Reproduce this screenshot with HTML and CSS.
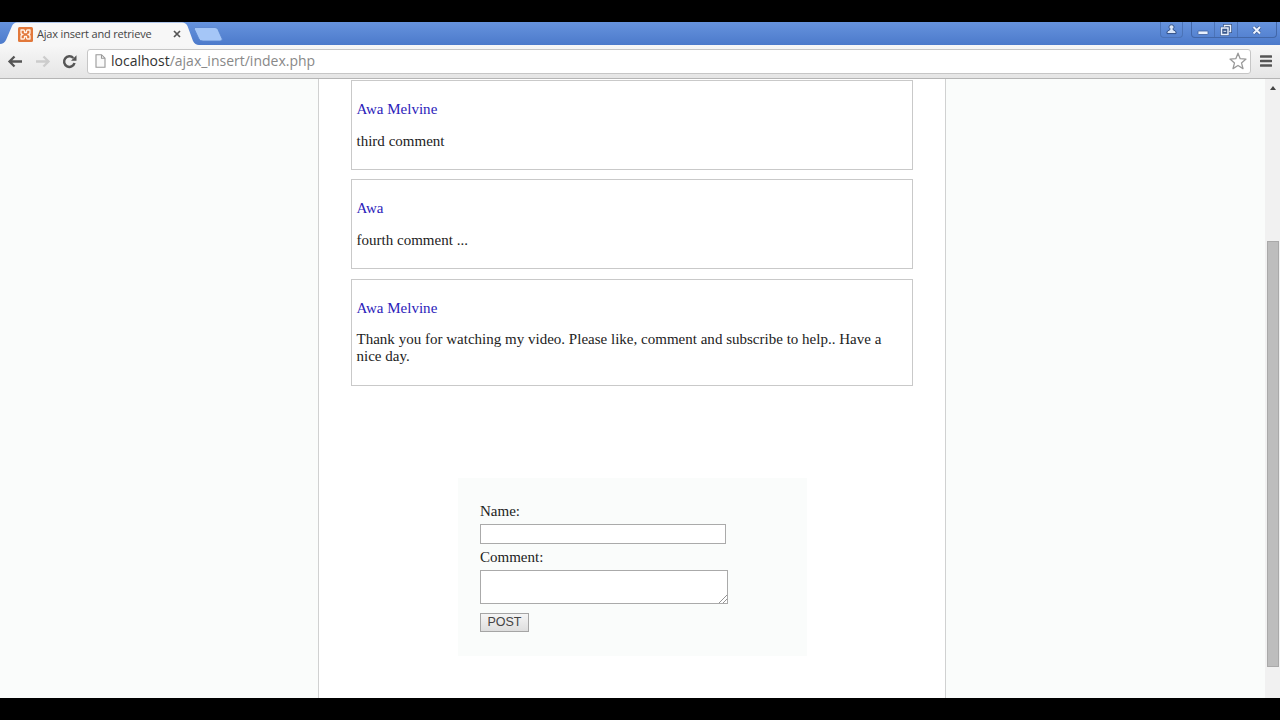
FILE: index.html
```html
<!DOCTYPE html>
<html lang="en">
<head>
<meta charset="utf-8">
<title>Ajax insert and retrieve</title>
<link rel="stylesheet" href="styles.css">
</head>
<body>
<div class="screen">
  <header class="tabbar">
    <svg class="tabshape" width="232" height="24" viewBox="0 0 232 24">
      <path d="M0 24V22Q4 22 6 18L12 4Q13.500 .5 17 .5H182Q186 .5 187.500 4L193 19Q195 23 199 23V24Z" fill="#f7f7f7"/>
      <path d="M195 5.500H215Q217 5.500 218 7.500L222 16.500Q223 19 220 19H203Q200 19 199 17L194.500 7.500Q194 5.500 195 5.500Z" fill="#a5c6f7" stroke="#5583cd" stroke-width=".8"/>
    </svg>
    <div class="tab">
      <svg width="15" height="15" viewBox="0 0 15 15"><rect width="15" height="15" rx="1.500" fill="#e2783b"/><path d="M3 3H5.500Q6.500 3 6.500 4V5.500H8.500V4Q8.500 3 9.500 3H12V5.500Q12 7.500 10 7.500Q12 7.500 12 9.500V12H9.500Q8.500 12 8.500 11V9.500H6.500V11Q6.500 12 5.500 12H3V9.500Q3 7.500 5 7.500Q3 7.500 3 5.500Z" fill="none" stroke="#fff3e8" stroke-width="1.300" stroke-linejoin="round"/></svg>
      <span class="tab-title">Ajax insert and retrieve</span>
      <svg class="close" width="8" height="8" viewBox="0 0 8 8"><path d="M1 1L7 7M7 1L1 7" stroke="#555" stroke-width="1.700"/></svg>
    </div>
    <div class="controls">
      <div class="control user"><svg width="11" height="11" viewBox="0 0 11 11"><path d="M5.500 .8A2.200 2.200 0 0 1 7 4.800V5.600L10 7.600V9.600H1V7.600L4 5.600V4.800A2.200 2.200 0 0 1 5.500 .8Z" fill="#dce8fa" stroke="#304f85"/></svg></div>
      <div class="group">
        <div class="control min"><svg width="12" height="12" viewBox="0 0 12 12"><rect x="1" y="7" width="10" height="3.500" rx=".7" fill="#e9f1fd" stroke="#3e609c" stroke-width=".8"/></svg></div>
        <div class="control max"><svg width="12" height="12" viewBox="0 0 12 12"><path d="M4.500 3V1.500H10.500V7.500H9" fill="none" stroke="#344f80" stroke-width="3"/><path d="M4.500 3V1.500H10.500V7.500H9" fill="none" stroke="#e9f1fd" stroke-width="1.500"/><rect x="1.500" y="4" width="6.500" height="6.500" fill="#6485bd" stroke="#344f80" stroke-width="2.500"/><rect x="1.500" y="4" width="6.500" height="6.500" fill="#38578b" stroke="#e9f1fd" stroke-width="1.500"/><path d="M3.500 7.300H6.200" stroke="#e9f1fd"/></svg></div>
        <div class="control exit"><svg width="12" height="10" viewBox="0 0 12 10"><path d="M2.500 2L9 8.500M9 2L2.500 8.500" stroke="#3c5e99" stroke-width="3.500"/><path d="M2.500 2L9 8.500M9 2L2.500 8.500" stroke="#edf3ff" stroke-width="2"/></svg></div>
      </div>
    </div>
  </header>
  <nav class="toolbar">
    <svg width="80" height="24" viewBox="0 0 80 24">
      <path d="M22 12.500H10M14.500 7.500L9.500 12.500L14.500 17.500" fill="none" stroke="#555" stroke-width="2.300"/>
      <path d="M36 12.500H48M43.500 7.500L48.500 12.500L43.500 17.500" fill="none" stroke="#ccc" stroke-width="2.300"/>
      <path d="M73.300 9A5.300 5.300 0 1 0 74.500 14" fill="none" stroke="#555" stroke-width="2.500"/><path d="M76.500 6.300V11.800H71Z" fill="#555"/>
    </svg>
    <div class="address">
      <svg class="page-icon" width="11" height="14" viewBox="0 0 11 14"><path d="M1 .7H6.500L10 4.200V13.300H1ZM6.500 .7V4.200H10" fill="#fafafa" stroke="#999" stroke-width="1.100"/></svg>
      <div class="url"><span class="host">localhost</span>/ajax_insert/index.php</div>
      <svg class="star" width="18" height="18" viewBox="0 0 18 18"><path d="M9 1.200L11.200 6.700L17 7.100L12.500 10.900L14 16.600L9 13.500L4 16.600L5.500 10.900L1 7.100L6.800 6.700Z" fill="#fff" stroke="#999" stroke-width="1.300" stroke-linejoin="round"/></svg>
    </div>
    <svg class="menu" width="12" height="12" viewBox="0 0 12 12"><path d="M.8 1.500H11.200M.8 6H11.200M.8 10.500H11.200" stroke="#555" stroke-width="2.300" stroke-linecap="round"/></svg>
  </nav>
  <div class="viewport">
    <main class="column">
      <article class="comment"><p class="author">Awa Melvine</p><p>third comment</p></article>
      <article class="comment"><p class="author">Awa</p><p>fourth comment ...</p></article>
      <article class="comment long"><p class="author">Awa Melvine</p><p class="message">Thank you for watching my video. Please like, comment and subscribe to help.. Have a<br>nice day.</p></article>
      <form class="form">
        <label for="name">Name:</label>
        <input id="name" class="name" type="text">
        <label for="comment">Comment:</label>
        <div class="area"><textarea id="comment" class="text"></textarea><svg class="grip" width="8" height="8" viewBox="0 0 8 8"><path d="M0 8L8 0M4 8L8 4" stroke="#888" stroke-width=".9"/></svg></div>
        <button class="post" type="button">POST</button>
      </form>
    </main>
    <div class="scrollbar"><svg class="up" width="6" height="4" viewBox="0 0 6 4"><path d="M0 4L3 0L6 4Z" fill="#444"/></svg><div class="thumb"></div></div>
  </div>
</div>
</body>
</html>
```
FILE: styles.css
```css
* { box-sizing: border-box; }
body { margin: 0; background: #000; }
svg { display: block; flex: none; }
.screen { width: 1280px; height: 720px; padding: 22px 0; display: flex; flex-direction: column; overflow: hidden; background: #000; }
.tabbar { position: relative; height: 23px; flex: none; display: flex; justify-content: space-between; background: linear-gradient(#6693dd, #4c7acb); }
.tabshape { position: absolute; left: 0; top: 0; }
.tab { position: relative; display: flex; align-items: center; padding-left: 18px; width: 190px; height: 24px; }
.tab-title { margin-left: 4px; width: 138px; font: 11px/16px "Open Sans", sans-serif; letter-spacing: -.18px; color: #444; white-space: nowrap; }
.close { margin-left: -2px; }
.controls { display: flex; height: 16px; padding-right: 3px; gap: 7px; }
.group { display: flex; border: 1px solid #4267a8; border-top: 0; border-radius: 0 0 4px 4px; }
.control { display: flex; align-items: center; justify-content: center; }
.user { width: 23px; margin-right: 1px; border: 1px solid #4b73b7; border-top: 0; border-radius: 0 0 4px 4px; }
.min, .max { width: 23px; border-right: 1px solid #4b73b7; }
.exit { width: 38px; }
.toolbar { position: relative; height: 34px; flex: none; display: flex; align-items: center; padding: 0 7px 1px 0; background: linear-gradient(#f7f7f7, #e5e5e5); border-bottom: 1px solid #b5b5b5; }
.address { display: flex; align-items: center; margin-left: 7px; width: 1164px; height: 25px; padding: 0 3px 0 7px; background: #fff; border: 1px solid #c6c6c6; border-radius: 3px; }
.url { flex: 1; margin-left: 5px; font: 14px/20px "Open Sans", sans-serif; color: #888; }
.host { color: #333; }
.menu { margin-left: 9px; }
.viewport { flex: 1; min-height: 0; display: flex; background: #fafcfb; }
.column { margin-left: 318px; width: 628px; border: solid #d0d1d1; border-width: 0 1px; background: #fff; padding: 1px 32px 0; font: 15px/17px "Liberation Serif", serif; color: #222; }
.comment { height: 90px; width: 562px; margin-bottom: 9.400px; padding: 20px 4.500px 0; border: 1px solid #c9c9c9; }
.comment p { margin: 0 0 15px; white-space: nowrap; letter-spacing: .01px; }
.comment .author { color: #2b1cba; }
.comment .message { margin-top: -.3px; }
.long { height: 107px; }
.form { width: 349px; height: 178px; margin: 92px 0 0 106.500px; padding: 25px 22px 0 22.500px; display: flex; flex-direction: column; align-items: flex-start; background: #fafcfb; }
.name { width: 246px; height: 20px; margin: 4px 0 5px; padding: 1px; border: 1px solid #aaa; background: #fff; }
.area { position: relative; height: 34px; margin: 4px 0 9px; }
.text { display: block; width: 248px; height: 34px; border: 1px solid #aaa; background: #fff; resize: none; }
.grip { position: absolute; right: 1px; bottom: 1px; }
.post { width: 49px; height: 19px; padding: 0 0 1px; border: 1px solid #a5a5a5; border-radius: 0; background: linear-gradient(#f5f5f5, #dedede); color: #444; font: 12.500px/16px "Liberation Sans", sans-serif; }
.scrollbar { display: flex; flex-direction: column; align-items: center; width: 15px; margin-left: auto; padding-top: 7px; background: #f1f1f1; }
.thumb { width: 12px; height: 426px; margin: 151px 0 0 1px; background: #bdbdbd; border: 1px solid #a9a9a9; }
```
